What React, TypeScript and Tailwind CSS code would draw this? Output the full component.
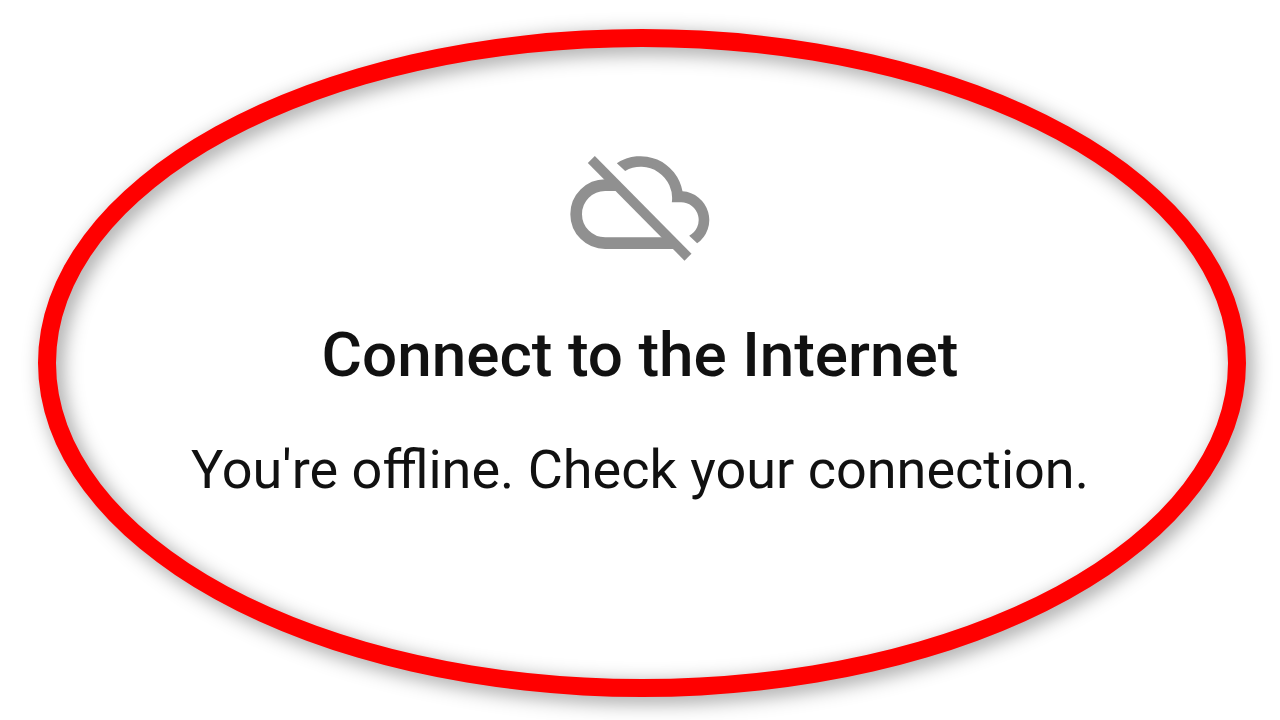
interface IconProps {
  className?: string;
}

function CloudOffIcon({ className }: IconProps) {
  return (
    <svg viewBox="62 47 417 315" className={className} fill="currentColor" aria-hidden="true">
      <path
        d="M202 134.5 H166 A87 87 0 0 0 166 308.5 H375"
        fill="none"
        stroke="currentColor"
        strokeWidth="35"
      />
      <path d="M201 69 A128 128 0 0 1 398 153 A86 86 0 0 1 442 309 L418 286 A53 53 0 0 0 393 186 H366 A94 94 0 0 0 226 92 Z" />
      <path d="M135 47 L114 68 L404 361 L425 340 Z" />
    </svg>
  );
}

function HighlightRing() {
  return (
    <div className="pointer-events-none absolute top-[29px] right-[34px] bottom-[23px] left-[38px] rounded-[50%] border-[18px] border-[#ff0000] drop-shadow-[5px_5px_10px_rgba(0,0,0,0.4)]" />
  );
}

interface OfflineMessageProps {
  title: string;
  text: string;
}

function OfflineMessage({ title, text }: OfflineMessageProps) {
  return (
    <section className="flex flex-col items-center text-center text-[#111111]">
      <CloudOffIcon className="h-[105px] w-[140px] text-[#909090]" />
      <h1 className="mt-[58px] text-[62px] leading-[72px] font-medium">{title}</h1>
      <p className="mt-[47px] text-[54px] leading-[64px]">{text}</p>
    </section>
  );
}

export default function App() {
  return (
    <main className="relative flex min-h-screen items-center justify-center overflow-hidden bg-white pb-[62px] font-['Roboto',sans-serif]">
      <OfflineMessage
        title="Connect to the Internet"
        text="You're offline. Check your connection."
      />
      <HighlightRing />
    </main>
  );
}
